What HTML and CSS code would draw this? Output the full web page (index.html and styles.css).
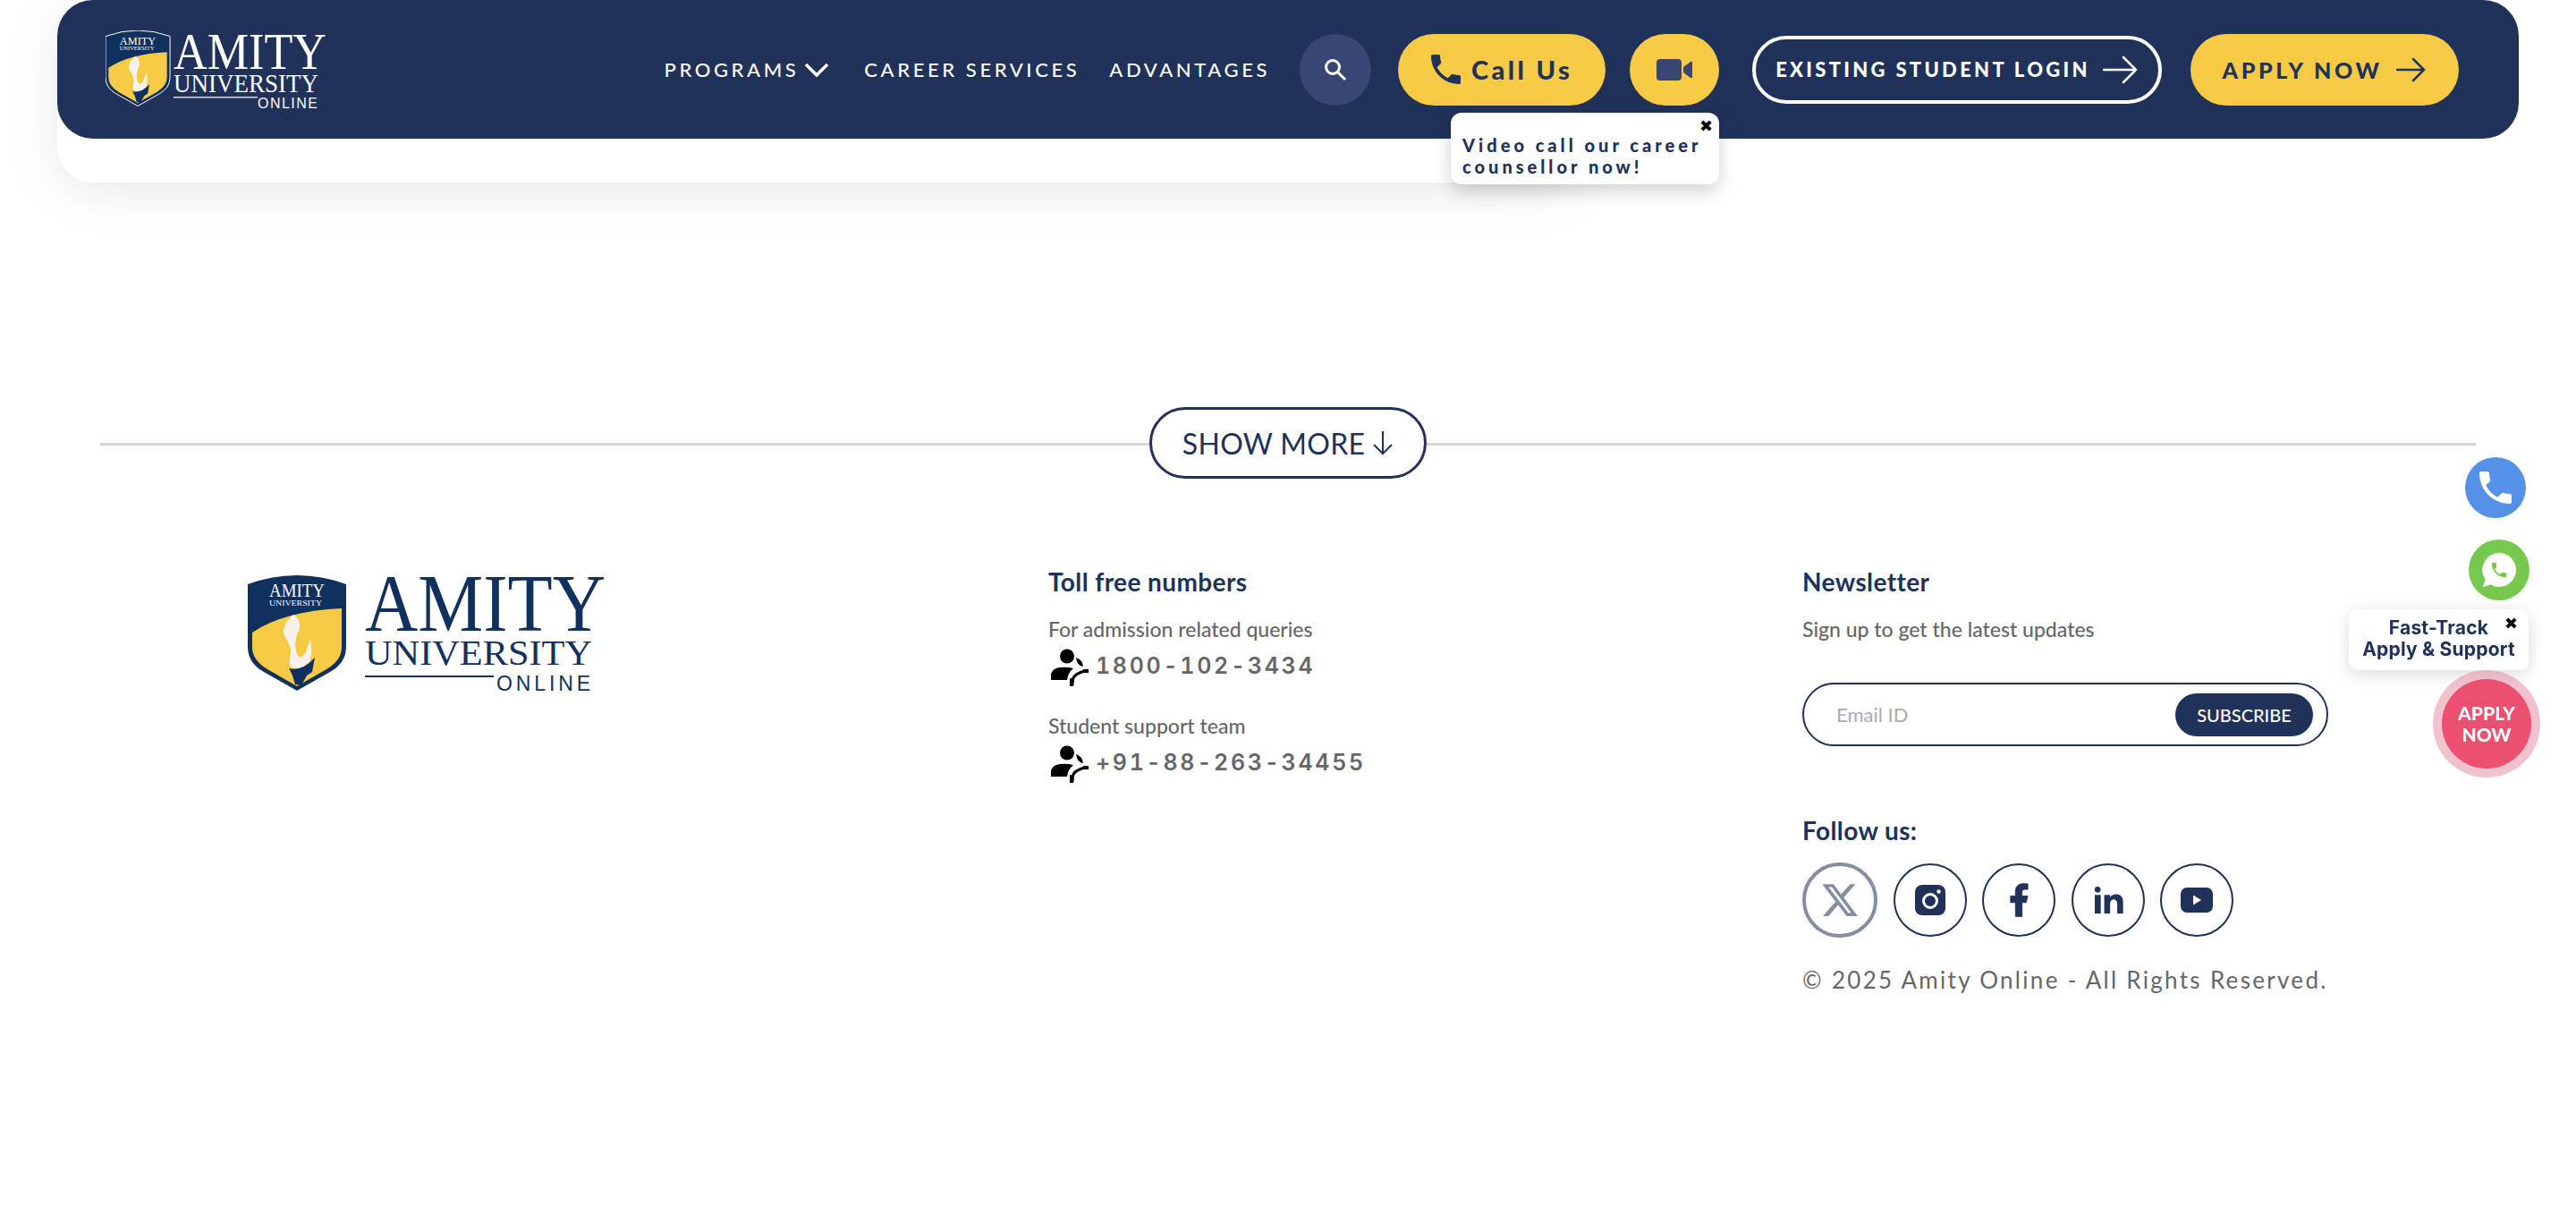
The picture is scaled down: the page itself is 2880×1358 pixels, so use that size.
FILE: index.html
```html
<!DOCTYPE HTML>
<html>
<head>
<meta http-equiv="Content-Type" content="text/html; charset=utf-8">
<title>Amity University Online</title>
<link rel="stylesheet" href="styles.css">
</head>
<body>

<div class="top-wrap">
	<div class="top-panel"></div>
	<header class="top-bar">
		<a class="logo-top">
			<svg width="246" height="88" viewBox="0 0 246 88">
				<use href="#shield" width="72" height="85"></use>
				<path transform="scale(.655)" fill="none" stroke="#fff" stroke-width="1.5" d="M0 10Q55 -10 110 10V80Q110 98 92 108L55 129 18 108Q0 98 0 80Z"></path>
				<g class="logo-serif" fill="#fff">
					<text x="76" y="43" font-size="58" textLength="171" lengthAdjust="spacingAndGlyphs">AMITY</text>
					<text x="76" y="69" font-size="30" textLength="162" lengthAdjust="spacingAndGlyphs">UNIVERSITY</text>
				</g>
				<rect x="76" y="74" width="94" height="1.5" fill="#d8dbe4"></rect>
				<text class="logo-sans" x="170" y="86.5" font-size="16" fill="#fff" textLength="67">ONLINE</text>
			</svg>
		</a>
		<nav class="nav">
			<a class="nav-link">PROGRAMS
				<svg class="nav-chevron" width="28" height="16" viewBox="0 0 28 16"><path d="M2 2l12 12L26 2" fill="none" stroke="#fff" stroke-width="3.5"></path></svg>
			</a>
			<a class="nav-link">CAREER SERVICES</a>
			<a class="nav-link">ADVANTAGES</a>
		</nav>
		<a class="search-btn">
			<svg width="26" height="26" viewBox="0 0 26 26"><circle cx="10" cy="10" r="7.5" fill="none" stroke="#fff" stroke-width="3"></circle><path d="M15.5 15.5L24 24" stroke="#fff" stroke-width="3"></path></svg>
		</a>
		<a class="pill-yellow call-btn">
			<svg width="33" height="33" viewBox="3 3 18 18"><path fill="#203259" d="M6.62 10.79c1.44 2.83 3.76 5.14 6.59 6.59l2.2-2.2c.27-.27.67-.36 1.02-.24 1.12.37 2.33.57 3.57.57.55 0 1 .45 1 1V20c0 .55-.45 1-1 1-9.39 0-17-7.61-17-17 0-.55.45-1 1-1h3.5c.55 0 1 .45 1 1 0 1.25.2 2.45.57 3.57.11.35.03.74-.25 1.02l-2.2 2.2z"></path></svg>
			Call Us
		</a>
		<div class="video-wrap">
			<a class="pill-yellow video-btn">
				<svg width="40" height="24" viewBox="0 0 40 24"><rect width="28" height="24" rx="4" fill="#374672"></rect><path d="M30 9l8-6q2-1 2 1v16q0 2-2 1l-8-6z" fill="#374672"></path></svg>
			</a>
			<div class="video-tip">
				<span class="tip-close">✖</span>
				Video call our career counsellor now!
			</div>
		</div>
		<a class="login-btn">EXISTING STUDENT LOGIN
			<svg width="40" height="32" viewBox="0 0 40 32"><path d="M1 16h36M23 2l14 14-14 14" fill="none" stroke="#fff" stroke-width="2.5" stroke-linecap="round"></path></svg>
		</a>
		<a class="pill-yellow apply-btn">APPLY NOW
			<svg width="34" height="28" viewBox="0 0 34 28"><path d="M1 14h30M19 2l12 12-12 12" fill="none" stroke="#203259" stroke-width="2.5" stroke-linecap="round"></path></svg>
		</a>
	</header>
</div>

<div class="more-row">
	<span class="more-line"></span>
	<a class="more-btn">SHOW MORE
		<svg width="24" height="28" viewBox="0 0 24 28"><path d="M12 1v25M2 16l10 10 10-10" fill="none" stroke="#203259" stroke-width="2"></path></svg>
	</a>
	<span class="more-line"></span>
</div>

<footer class="footer">
	<div class="foot-logo">
		<svg width="400" height="132" viewBox="0 0 400 132">
			<symbol id="shield" viewBox="0 0 110 130">
				<path fill="#10305e" d="M0 10Q55 -10 110 10V80Q110 98 92 108L55 129 18 108Q0 98 0 80Z"></path>
				<path fill="#f7ca45" d="M5 64Q40 40 105 37V80Q105 95 88 105L55 124 22 105Q5 95 5 80Z"></path>
				<path fill="#f4f2ea" d="M51 44C42 52 38 60 41 67 44 74 49 79 48 87 47 94 46 98 48 102 54 106 64 104 68 98 72 92 72 82 70 72 67 78 66 86 62 90 58 94 55 90 54 84 52 76 54 68 57 62 60 54 57 48 51 44Z"></path>
				<path fill="#10305e" d="M46 104Q60 108 75 92L72 108 66 112 60 123 53 122 50 112Z"></path>
				<text class="logo-serif" x="24" y="24" font-size="20" fill="#fff" textLength="62" lengthAdjust="spacingAndGlyphs">AMITY</text>
				<text class="logo-serif" x="24" y="34" font-size="8.5" fill="#fff" textLength="59" lengthAdjust="spacingAndGlyphs">UNIVERSITY</text>
			</symbol>
			<use href="#shield" width="110" height="130"></use>
			<g class="logo-serif" fill="#10305e">
				<text x="131" y="62" font-size="92" textLength="269" lengthAdjust="spacingAndGlyphs">AMITY</text>
				<text x="131" y="100" font-size="40" textLength="254" lengthAdjust="spacingAndGlyphs">UNIVERSITY</text>
			</g>
			<rect x="131" y="112" width="144" height="2" fill="#10305e"></rect>
			<text class="logo-sans" x="278" y="129" font-size="23" fill="#10305e" textLength="105">ONLINE</text>
		</svg>
	</div>

	<div class="foot-col">
		<h3 class="foot-title">Toll free numbers</h3>
		<p class="foot-label">For admission related queries</p>
		<div class="phone-row">
			<svg class="agent-icon" width="42" height="42" viewBox="0 0 42 42"><use href="#agent"></use></svg>
			<span class="phone-num">1800-102-3434</span>
		</div>
		<p class="foot-label second">Student support team</p>
		<div class="phone-row">
			<svg class="agent-icon" width="42" height="42" viewBox="0 0 42 42">
				<symbol id="agent" viewBox="0 0 42 42">
					<circle cx="18" cy="8.5" r="8"></circle>
					<path d="M28 10q7 2 8 10-7-1-8-10z"></path>
					<path d="M0 35v-7q2-6 10-7 8-1 15 1-6 5-7 13z"></path>
					<path d="M24 41q-1-10 6-13 5-3 11-3" fill="none" stroke="#000" stroke-width="3"></path>
					<path d="M21 33l5 1-1 8h-4zM36 23h6v4h-6z"></path>
				</symbol>
				<use href="#agent"></use>
			</svg>
			<span class="phone-num">+91-88-263-34455</span>
		</div>
	</div>

	<div class="foot-col">
		<h3 class="foot-title">Newsletter</h3>
		<p class="foot-label">Sign up to get the latest updates</p>
		<form class="sub-form">
			<input class="sub-input" type="text" placeholder="Email ID">
			<button class="sub-btn" type="button">SUBSCRIBE</button>
		</form>
		<h3 class="foot-title follow">Follow us:</h3>
		<div class="socials">
			<a class="social faded">
				<svg width="44" height="44" viewBox="0 0 24 24"><path fill="#203259" d="M18.244 2.25h3.308l-7.227 8.26 8.502 11.24H16.17l-5.214-6.817L4.99 21.75H1.68l7.73-8.835L1.254 2.25H8.08l4.713 6.231zm-1.161 17.52h1.833L7.084 4.126H5.117z"></path></svg>
			</a>
			<a class="social">
				<svg width="34" height="34" viewBox="0 0 34 34"><rect width="34" height="34" rx="8" fill="#203259"></rect><circle cx="17" cy="18" r="7.500" fill="none" stroke="#fff" stroke-width="3"></circle><circle cx="26.500" cy="7.500" r="2.200" fill="#fff"></circle></svg>
			</a>
			<a class="social">
				<svg width="44" height="44" viewBox="0 0 24 24"><path fill="#203259" stroke="#203259" stroke-width=".5" d="M14 13.5h2.5l1-4H14v-2c0-1.03 0-2 2-2h1.5V2.14c-.326-.043-1.557-.14-2.857-.14C11.928 2 10 3.657 10 6.7v2.8H7v4h3V22h4z"></path></svg>
			</a>
			<a class="social">
				<svg width="40" height="40" viewBox="0 0 24 24"><path fill="#203259" d="M6.94 5a2 2 0 1 1-4-.002 2 2 0 0 1 4 .002zM7 8.48H3V21h4V8.48zm6.32 0H9.34V21h3.94v-6.57c0-3.66 4.77-4 4.77 0V21H22v-7.93c0-6.17-7.06-5.94-8.72-2.91l.04-1.68z"></path></svg>
			</a>
			<a class="social">
				<svg width="36" height="28" viewBox="0 0 36 28"><rect width="36" height="28" rx="7" fill="#203259"></rect><path d="M14 8.500l9 5.500-9 5.500z" fill="#fff"></path></svg>
			</a>
		</div>
		<p class="copyright">© 2025 Amity Online - All Rights Reserved.</p>
	</div>
</footer>

<a class="float-call">
	<svg width="36" height="36" viewBox="3 3 18 18"><path fill="#fff" d="M6.62 10.79c1.44 2.83 3.76 5.14 6.59 6.59l2.2-2.2c.27-.27.67-.36 1.02-.24 1.12.37 2.33.57 3.57.57.55 0 1 .45 1 1V20c0 .55-.45 1-1 1-9.39 0-17-7.61-17-17 0-.55.45-1 1-1h3.5c.55 0 1 .45 1 1 0 1.25.2 2.45.57 3.57.11.35.03.74-.25 1.02l-2.2 2.2z"></path></svg>
</a>
<a class="float-whats">
	<svg width="40" height="40" viewBox="0 0 40 40"><path fill="#fff" d="M20 1a19 19 0 0 1 0 38q-5 0-9-2.500L2 39l2.500-8.500A19 19 0 0 1 20 1z"></path><path fill="#76c94d" transform="translate(9 9) scale(.92)" d="M6.62 10.79c1.44 2.83 3.76 5.14 6.59 6.59l2.2-2.2c.27-.27.67-.36 1.02-.24 1.12.37 2.33.57 3.57.57.55 0 1 .45 1 1V20c0 .55-.45 1-1 1-9.39 0-17-7.61-17-17 0-.55.45-1 1-1h3.5c.55 0 1 .45 1 1 0 1.25.2 2.45.57 3.57.11.35.03.74-.25 1.02l-2.2 2.2z"></path></svg>
</a>
<div class="float-tip">
	<span class="tip-close">✖</span>
	Fast-Track<br>Apply &amp; Support
</div>
<a class="float-apply">APPLY<br>NOW</a>

</body>
</html>
```

FILE: styles.css
```css
html,body{ margin:0;padding:0;background:#fff;}
body{ font-family:"Lato","Open Sans",sans-serif;color:#666;min-height:1358px;}
h3,p{ margin:0;}
a{ color:inherit;text-decoration:none;}

.logo-serif{ font-family:"Liberation Serif",serif;}
.logo-sans{ font-family:"Liberation Sans",sans-serif;}

/* top */
.top-wrap{ position:relative;height:204px;margin:0 64px;}
.top-panel{ position:absolute;top:0;left:0;width:1700px;height:204px;background:#fff;border-radius:40px;box-shadow:0 10px 60px rgba(0,0,0,.09);}
.top-bar{ position:relative;display:flex;align-items:center;height:155px;padding:0 67px 0 54px;background:#203259;border-radius:40px;box-sizing:border-box;}
.logo-top{ display:flex;}
.nav{ display:flex;align-items:center;gap:33px;margin-left:auto;}
.nav-link{ display:flex;align-items:center;gap:6px;color:#fff;font-size:22px;font-weight:500;letter-spacing:3.6px;white-space:nowrap;}
.nav-link:first-child{ margin-right:6px;}
.search-btn{ display:flex;align-items:center;justify-content:center;width:80px;height:80px;margin-left:33px;background:#374672;border-radius:50%;}
.pill-yellow{ display:flex;align-items:center;justify-content:center;height:80px;background:#f7ca45;border-radius:40px;color:#203259;font-weight:700;white-space:nowrap;}
.call-btn{ width:232px;margin-left:30px;gap:12px;font-size:29px;font-weight:900;letter-spacing:3.4px;}
.video-wrap{ position:relative;margin-left:27px;}
.video-btn{ width:100px;}
.video-tip{ position:absolute;top:88px;right:0;width:300px;height:80px;padding:24px 8px 0 13px;box-sizing:border-box;background:#fff;border-radius:12px;box-shadow:0 8px 20px rgba(0,0,0,.18);color:#203259;font-size:20px;font-weight:900;line-height:24px;letter-spacing:4px;}
.tip-close{ position:absolute;top:5px;right:7px;color:#000;font-family:"DejaVu Sans",sans-serif;font-size:18px;font-weight:700;line-height:20px;letter-spacing:0;}
.login-btn{ display:flex;align-items:center;justify-content:center;gap:14px;width:458px;height:76px;margin-left:37px;border:4px solid #fff;border-radius:40px;box-sizing:border-box;color:#fff;font-size:22px;font-weight:900;letter-spacing:3.3px;white-space:nowrap;}
.apply-btn{ width:300px;margin-left:32px;gap:16px;font-size:25px;font-weight:900;letter-spacing:3.6px;}

/* show more */
.more-row{ display:flex;align-items:center;margin:251px 112px 0;}
.more-line{ flex:1;height:3px;margin-top:2px;background:#d4d4d4;}
.more-btn{ display:flex;align-items:center;justify-content:center;gap:8px;width:310px;height:80px;border:3px solid #203259;border-radius:40px;box-sizing:border-box;color:#203259;font-size:32px;letter-spacing:.3px;}

/* footer */
.footer{ display:grid;grid-template-columns:895px 843px 1fr;margin-top:100px;padding-left:277px;}
.foot-logo{ padding-top:8px;}
.foot-logo svg{ display:block;}
.foot-title{ color:#203259;font-size:28px;font-weight:700;line-height:30px;letter-spacing:.4px;}
.foot-label{ margin-top:23px;font-size:23px;font-weight:500;line-height:30px;}
.foot-label.second{ margin-top:29px;}
.phone-row{ display:flex;align-items:center;gap:8px;height:42px;margin-top:7px;padding-left:3px;}
.phone-num{ padding-bottom:4px;font-family:"Inter",sans-serif;font-size:25px;font-weight:600;font-variant-numeric:tabular-nums;letter-spacing:2.7px;color:#666;}
.agent-icon{ flex:none;}
.sub-form{ display:flex;align-items:center;justify-content:space-between;width:588px;height:71px;margin-top:45px;padding:0 15px 0 36px;border:2px solid #203259;border-radius:36px;box-sizing:border-box;}
.sub-input{ width:300px;border:0;outline:0;padding:0;background:none;font-family:inherit;font-size:22px;color:#666;}
.sub-input::placeholder{ color:#a4abb9;opacity:1;}
.sub-btn{ width:154px;height:48px;border:0;border-radius:24px;background:#203259;color:#fff;font-family:inherit;font-size:20px;font-weight:500;}
.foot-title.follow{ margin-top:79px;}
.socials{ display:flex;align-items:center;gap:17.5px;margin-top:21px;}
.social{ display:flex;align-items:center;justify-content:center;width:82px;height:82px;border:2px solid #203259;border-radius:50%;box-sizing:border-box;}
.social.faded{ width:84px;height:84px;border-width:4px;opacity:.55;}
.copyright{ margin-top:29px;font-size:26px;line-height:36px;letter-spacing:2.3px;white-space:nowrap;}

/* floating */
.float-call,.float-whats{ position:fixed;display:flex;align-items:center;justify-content:center;width:68px;height:68px;border-radius:50%;}
.float-call{ top:511px;left:2756px;background:#5591e8;}
.float-whats{ top:603px;left:2760px;background:#76c94d;}
.float-tip{ position:fixed;top:681px;left:2626px;width:201px;height:68px;padding-top:9px;box-sizing:border-box;background:#fff;border-radius:10px;box-shadow:0 4px 20px rgba(0,0,0,.15);color:#203259;font-family:"Inter",sans-serif;font-size:21px;font-weight:700;line-height:24px;letter-spacing:.2px;text-align:center;}
.float-tip .tip-close{ top:6px;right:12px;}
.float-apply{ position:fixed;top:759px;left:2730px;display:flex;align-items:center;justify-content:center;width:100px;height:100px;background:#ec5070;border-radius:50%;box-shadow:0 0 0 10px rgba(225,120,145,.45);color:#fff;font-size:21px;font-weight:900;line-height:24px;text-align:center;}
```
